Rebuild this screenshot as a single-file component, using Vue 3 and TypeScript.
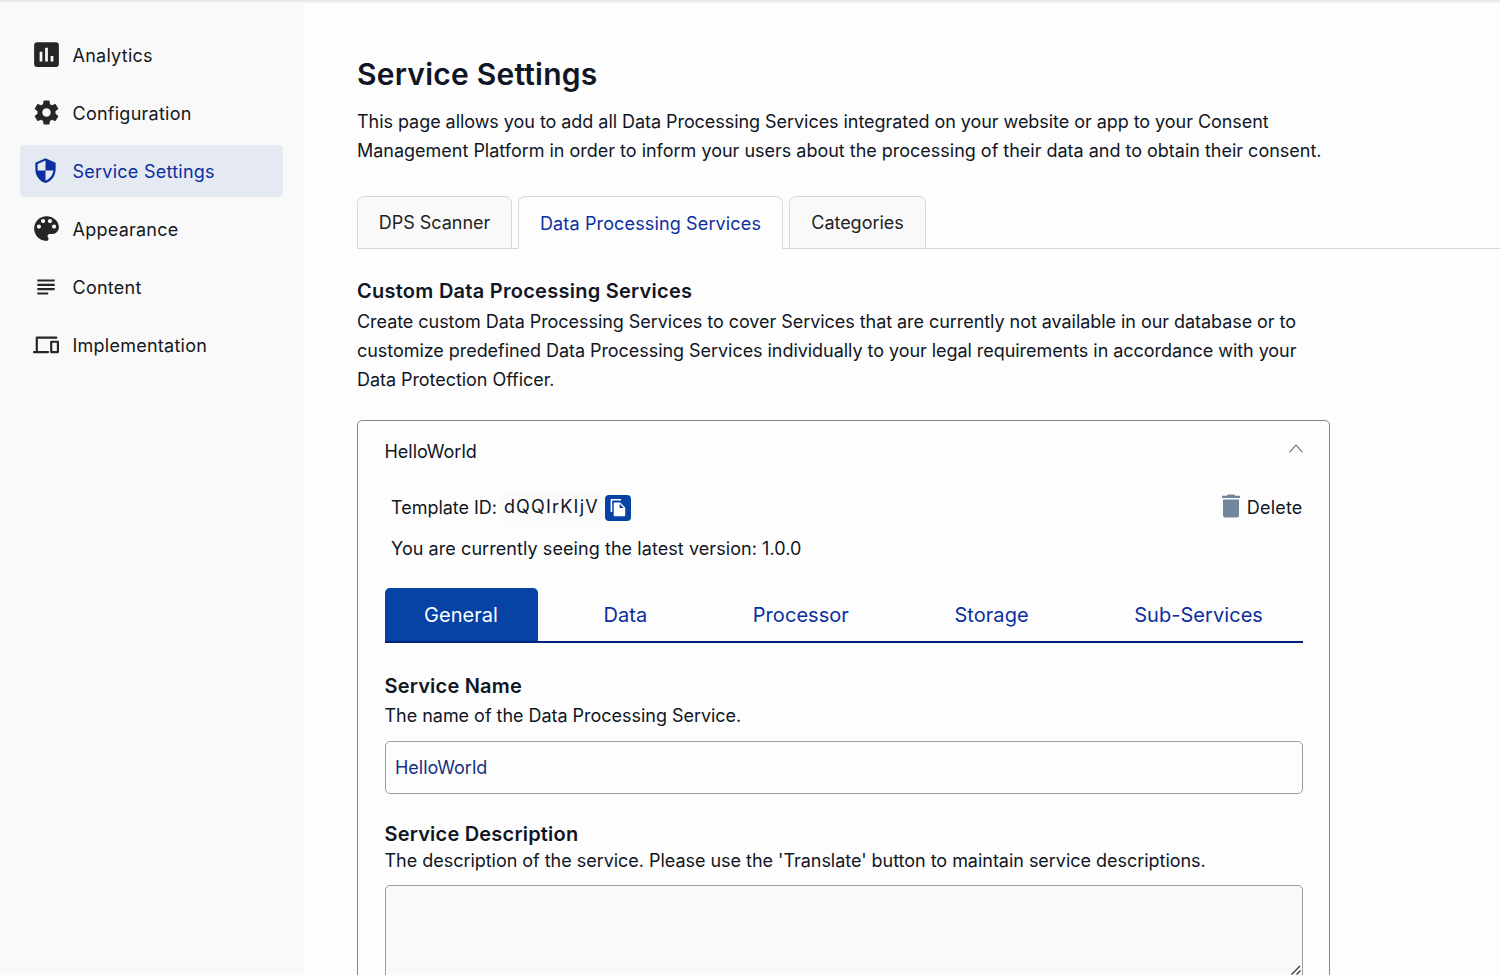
<script setup lang="ts">
import { ref } from 'vue'

interface NavItem {
  label: string
  icon: string
  box: number
}

const navItems: NavItem[] = [
  { label: 'Analytics', icon: 'analytics', box: 33 },
  { label: 'Configuration', icon: 'gear', box: 29 },
  { label: 'Service Settings', icon: 'shield', box: 27 },
  { label: 'Appearance', icon: 'palette', box: 33 },
  { label: 'Content', icon: 'lines', box: 26 },
  { label: 'Implementation', icon: 'devices', box: 26 },
]
const activeNav = ref('Service Settings')

const pageTabs = ['DPS Scanner', 'Data Processing Services', 'Categories']
const activePageTab = ref('Data Processing Services')

const detailTabs = ['General', 'Data', 'Processor', 'Storage', 'Sub-Services']
const activeDetail = ref('General')

const serviceName = ref('HelloWorld')
const description = ref('')
</script>

<template>
  <div class="app">
    <aside class="sidebar">
      <nav class="nav">
        <a
          v-for="item in navItems"
          :key="item.label"
          class="nav-item"
          :class="{ active: item.label === activeNav }"
          @click="activeNav = item.label"
        >
          <span class="nav-icon">
            <svg :width="item.box" :height="item.box" viewBox="0 0 24 24" fill="currentColor">
              <path v-if="item.icon === 'analytics'" d="M19 3H5c-1.100 0-2 .9-2 2v14c0 1.100.9 2 2 2h14c1.100 0 2-.9 2-2V5c0-1.100-.9-2-2-2zM9 17H7v-7h2v7zm4 0h-2V7h2v10zm4 0h-2v-4h2v4z" />
              <path v-else-if="item.icon === 'gear'" d="M19.430 12.980c.040-.320.070-.640.070-.980s-.030-.660-.070-.980l2.110-1.650c.190-.150.240-.420.120-.640l-2-3.460c-.120-.220-.390-.300-.610-.220l-2.490 1c-.520-.400-1.080-.730-1.690-.980l-.380-2.650C14.460 2.180 14.250 2 14 2h-4c-.250 0-.460.180-.490.420l-.380 2.650c-.610.250-1.170.590-1.690.980l-2.490-1c-.230-.090-.490 0-.610.220l-2 3.460c-.130.220-.070.490.120.640l2.110 1.650c-.040.320-.070.650-.070.980s.030.660.070.980l-2.110 1.650c-.190.150-.240.420-.120.640l2 3.460c.120.220.390.300.610.220l2.490-1c.520.400 1.080.730 1.690.980l.380 2.650c.030.240.240.420.490.420h4c.250 0 .460-.180.490-.420l.380-2.650c.610-.250 1.170-.590 1.690-.980l2.490 1c.230.090.490 0 .610-.220l2-3.460c.120-.220.070-.490-.120-.640l-2.110-1.650zM12 15.500c-1.930 0-3.500-1.570-3.500-3.500s1.570-3.500 3.500-3.500 3.500 1.570 3.500 3.500-1.570 3.500-3.500 3.500z" />
              <path v-else-if="item.icon === 'shield'" d="M12 1 3 5v6c0 5.550 3.840 10.740 9 12 5.160-1.260 9-6.450 9-12V5l-9-4zm0 10.990h7c-.530 4.120-3.280 7.790-7 8.940V12H5V6.300l7-3.110v8.800z" />
              <path v-else-if="item.icon === 'palette'" d="M12 3c-4.970 0-9 4.030-9 9s4.030 9 9 9c.830 0 1.500-.670 1.500-1.500 0-.390-.150-.740-.390-1.010-.230-.260-.380-.610-.380-.990 0-.830.670-1.500 1.500-1.500H16c2.760 0 5-2.240 5-5 0-4.420-4.030-8-9-8zm-5.500 9c-.830 0-1.500-.670-1.500-1.500S5.670 9 6.500 9 8 9.670 8 10.500 7.330 12 6.500 12zm3-4C8.670 8 8 7.330 8 6.500S8.670 5 9.500 5s1.500.670 1.500 1.500S10.330 8 9.500 8zm5 0c-.830 0-1.500-.670-1.500-1.500S13.670 5 14.500 5s1.500.670 1.500 1.500S15.330 8 14.500 8zm3 4c-.830 0-1.500-.670-1.500-1.500S16.670 9 17.500 9s1.500.670 1.500 1.500-.670 1.500-1.500 1.500z" />
              <path v-else-if="item.icon === 'lines'" d="M14 17H4v2h10v-2zm6-8H4v2h16V9zM4 15h16v-2H4v2zM4 5v2h16V5H4z" />
              <path v-else d="M3.500 18V5.200H21.500M.9 18.500h13M16.800 9h6.200v9.500h-6.200z" fill="none" stroke="currentColor" stroke-width="2" stroke-linejoin="round" stroke-linecap="round" />
            </svg>
          </span>
          <span>{{ item.label }}</span>
        </a>
      </nav>
    </aside>

    <main class="content">
      <h1>Service Settings</h1>
      <p class="lead">
        <span class="tight">This page allows you to add all Data Processing Services integrated on your website or app to your Consent</span><br />
        Management Platform in order to inform your users about the processing of their data and to obtain their consent.
      </p>

      <div class="page-tabs">
        <button
          v-for="tab in pageTabs"
          :key="tab"
          class="page-tab"
          :class="{ active: tab === activePageTab }"
          @click="activePageTab = tab"
        >
          {{ tab }}
        </button>
      </div>

      <h2>Custom Data Processing Services</h2>
      <p class="intro">
        Create custom Data Processing Services to cover Services that are currently not available in our database or to<br />
        customize predefined Data Processing Services individually to your legal requirements in accordance with your<br />
        Data Protection Officer.
      </p>

      <section class="card">
        <header class="card-head">
          <span>HelloWorld</span>
          <svg class="chevron" width="14" height="9" viewBox="0 0 14 9" fill="none" stroke="currentColor" stroke-width="1.200">
            <path d="M.5 8.300 7 1.200l6.500 7.100" />
          </svg>
        </header>

        <div class="template-row">
          <span class="template-label">Template ID:</span>
          <code class="template-id">dQQIrKIjV</code>
          <button class="copy" aria-label="Copy">
            <svg width="16" height="18" viewBox="0 0 16 18" fill="currentColor">
              <path d="M1.500 0H11v1.500H2.200V13H.6V1.200C.6.500.900 0 1.500 0z" />
              <path fill-rule="evenodd" d="M5 3.400h5.200l5 5V16c0 .8-.5 1.300-1.300 1.300H5c-.8 0-1.300-.5-1.300-1.300V4.700c0-.8.5-1.300 1.300-1.300zm4.600 1.400v4.100h4.100z" />
            </svg>
          </button>
          <button class="delete">
            <svg width="18" height="24" viewBox="0 0 18 24" fill="currentColor">
              <path d="M0 1.800h4.500L6 .4h6l1.500 1.400H18v2.100H0zM1 5.500h16V21a2.500 2.500 0 0 1-2.500 2.500h-11A2.500 2.500 0 0 1 1 21z" />
            </svg>
            <span>Delete</span>
          </button>
        </div>
        <p class="version">You are currently seeing the latest version: 1.0.0</p>

        <div class="detail-tabs">
          <button
            v-for="tab in detailTabs"
            :key="tab"
            class="detail-tab"
            :class="{ active: tab === activeDetail }"
            @click="activeDetail = tab"
          >
            {{ tab }}
          </button>
        </div>

        <div class="field">
          <h3>Service Name</h3>
          <p>The name of the Data Processing Service.</p>
          <input v-model="serviceName" type="text" />
        </div>

        <div class="field description">
          <h3>Service Description</h3>
          <p>The description of the service. Please use the 'Translate' button to maintain service descriptions.</p>
          <div class="area">
            <textarea v-model="description"></textarea>
            <svg class="grip" width="12" height="12" viewBox="0 0 12 12" fill="none" stroke="currentColor" stroke-width="1.200">
              <path d="M1.500 10.500 10 2M6.500 10.500 10.500 6.500" />
            </svg>
          </div>
        </div>
      </section>
    </main>
  </div>
</template>

<style>
body {
  overflow: hidden;
}
</style>

<style scoped>
.app {
  display: flex;
  height: 975px;
  overflow: hidden;
  box-sizing: border-box;
  background: linear-gradient(#e4e4e4, #fdfdfd 4px) no-repeat top / 100% 4px, #fdfdfd;
  color: #101624;
  font-family: Inter, "Liberation Sans", sans-serif;
  font-size: 18px;
  letter-spacing: -0.03px;
}
.app * {
  box-sizing: border-box;
}
button {
  font: inherit;
  letter-spacing: inherit;
  color: inherit;
  border: 0;
  background: none;
  padding: 0;
}
h1,
h2,
h3,
p {
  margin: 0;
}
.sidebar {
  flex: none;
  width: 304px;
  margin-top: 4px;
  padding: 25px 21px 0 20px;
  background: #f9f9f9;
}
.nav {
  display: flex;
  flex-direction: column;
  gap: 6px;
}
.nav-item {
  display: flex;
  align-items: center;
  height: 52px;
  padding-left: 8px;
  border-radius: 4px;
  color: #15171a;
  letter-spacing: 0.25px;
}
.nav-icon {
  display: flex;
  justify-content: center;
  width: 36px;
  margin-right: 8.500px;
  padding-bottom: 1px;
  color: #242628;
}
.nav-item.active,
.nav-item.active .nav-icon {
  color: #0b2fa0;
}
.nav-item.active .nav-icon {
  padding-right: 1px;
}
.nav-item.active {
  background: #e5e9f2;
}
.content {
  flex: 1;
  min-width: 0;
  padding: 53px 0 0 53px;
}
h1 {
  font-size: 30px;
  font-weight: 600;
  line-height: 42px;
  letter-spacing: 0.23px;
}
.lead,
.intro {
  line-height: 29px;
  white-space: nowrap;
}
.lead {
  margin-top: 12px;
  letter-spacing: -0.01px;
}
.tight {
  letter-spacing: -0.05px;
}
.page-tabs {
  display: flex;
  gap: 6px;
  height: 53px;
  margin-top: 31px;
  box-shadow: inset 0 -1px #d6d8da;
}
.page-tab {
  width: 155px;
  border: 1px solid #d6d8da;
  border-radius: 7px 7px 0 0;
  background: #f9f9f9;
  color: #222;
}
.page-tab:nth-child(2) {
  width: 265px;
}
.page-tab:nth-child(3) {
  width: 137px;
}
.page-tab.active {
  padding-top: 1px;
  border-bottom-color: #fdfdfd;
  background: #fdfdfd;
  color: #0b2fa0;
  letter-spacing: 0.14px;
}
h2 {
  margin-top: 28px;
  font-size: 20px;
  font-weight: 600;
  line-height: 29px;
  letter-spacing: 0.26px;
}
.intro {
  margin-top: 1px;
  letter-spacing: -0.05px;
}
.card {
  width: 973px;
  height: 600px;
  margin-top: 26px;
  padding: 0 26.500px;
  border: 1px solid #85878a;
  border-radius: 5px;
}
.card-head {
  display: flex;
  align-items: center;
  justify-content: space-between;
  height: 60px;
}
.chevron {
  margin-bottom: 5px;
  color: #777;
}
.template-row {
  display: flex;
  align-items: center;
  height: 30px;
  margin-top: 11px;
  padding-left: 6.500px;
}
.template-id {
  margin-left: 2px;
  padding: 2px 6px 4px 5px;
  border-radius: 4px;
  background: #fafafa;
  font: inherit;
  letter-spacing: 1.2px;
}
.copy {
  display: flex;
  align-items: center;
  justify-content: center;
  width: 26px;
  height: 26px;
  margin-top: 2px;
  border-radius: 4px;
  background: #0643a5;
  color: #fff;
}
.delete {
  display: flex;
  align-items: center;
  gap: 7px;
  margin-left: auto;
  letter-spacing: 0.2px;
}
.delete svg {
  margin-bottom: 3px;
  color: #7286a0;
}
.version {
  margin-top: 12px;
  padding-left: 6.500px;
  line-height: 29px;
  letter-spacing: 0.07px;
}
.detail-tabs {
  display: flex;
  justify-content: space-between;
  height: 55px;
  margin-top: 25px;
  border-bottom: 2px solid #00247d;
  font-size: 20px;
  letter-spacing: 0.05px;
}
.detail-tab {
  padding: 0 39.500px;
  color: #0b2fa0;
}
.detail-tab.active {
  border-radius: 5px 5px 0 0;
  background: #0643a5;
  color: #fff;
}
.field {
  margin-top: 29px;
}
h3 {
  font-size: 20px;
  font-weight: 600;
  line-height: 29px;
  letter-spacing: 0.2px;
}
.field p {
  line-height: 29px;
  white-space: nowrap;
}
input,
textarea {
  display: block;
  width: 100%;
  border: 1px solid #9b9da0;
  border-radius: 5px;
  background: #fdfdfd;
  color: #14317d;
  font: inherit;
  letter-spacing: inherit;
}
input {
  height: 53px;
  margin-top: 11px;
  padding: 0 9.500px;
}
.description {
  margin-top: 26px;
}
.description p {
  line-height: 24px;
}
.area {
  position: relative;
  margin-top: 12px;
}
textarea {
  height: 96px;
  background: #f9f9f9;
  resize: none;
}
.grip {
  position: absolute;
  right: 1px;
  top: 79px;
  color: #333;
}
</style>
